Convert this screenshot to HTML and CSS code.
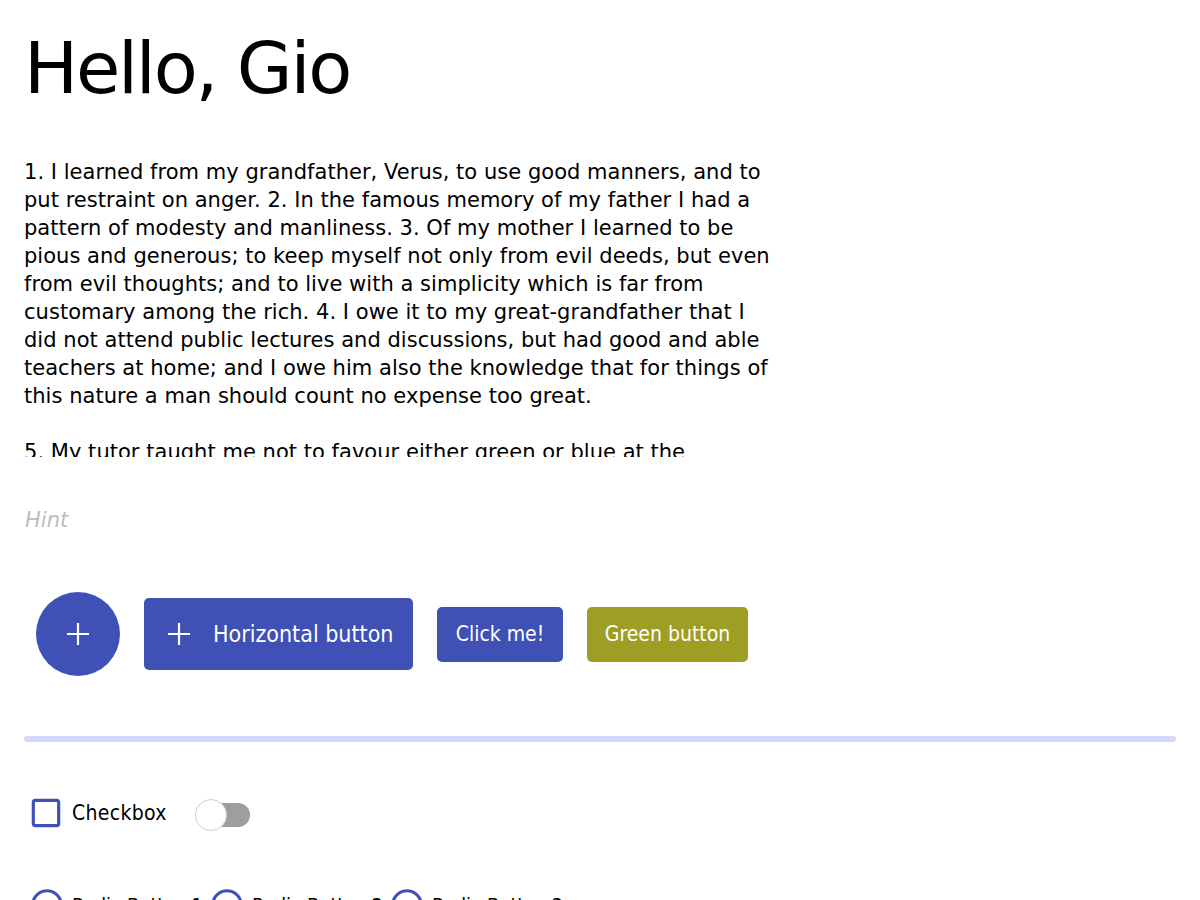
FILE: index.html
```html
<!DOCTYPE html>
<html lang="en">
<head>
<meta charset="utf-8">
<title>Kitchen</title>
<link rel="stylesheet" href="styles.css">
</head>
<body>
<div class="page">
  <h1 class="title">Hello, Gio</h1>

  <div class="editor">
    <div class="line">1. I learned from my grandfather, Verus, to use good manners, and to</div>
    <div class="line">put restraint on anger. 2. In the famous memory of my father I had a</div>
    <div class="line">pattern of modesty and manliness. 3. Of my mother I learned to be</div>
    <div class="line">pious and generous; to keep myself not only from evil deeds, but even</div>
    <div class="line">from evil thoughts; and to live with a simplicity which is far from</div>
    <div class="line">customary among the rich. 4. I owe it to my great-grandfather that I</div>
    <div class="line">did not attend public lectures and discussions, but had good and able</div>
    <div class="line">teachers at home; and I owe him also the knowledge that for things of</div>
    <div class="line">this nature a man should count no expense too great.</div>
    <div class="line"></div>
    <div class="line">5. My tutor taught me not to favour either green or blue at the</div>
  </div>

  <div class="hint">Hint</div>

  <div class="buttons">
    <button class="fab" type="button" aria-label="Add">
      <svg class="plus" viewBox="0 0 24 24" width="24" height="24"><path d="M12 1v22M1 12h22" stroke="#fff" stroke-width="2.2" fill="none"/></svg>
    </button>
    <button class="btn btn-icon" type="button">
      <svg class="plus" viewBox="0 0 24 24" width="24" height="24"><path d="M12 1v22M1 12h22" stroke="#fff" stroke-width="2.2" fill="none"/></svg>
      <span class="btn-label">Horizontal button</span>
    </button>
    <button class="btn btn-small btn-click" type="button"><span class="btn-label">Click me!</span></button>
    <button class="btn btn-small btn-green" type="button"><span class="btn-label">Green button</span></button>
  </div>

  <div class="progress"><div class="progress-fill" style="width:0%"></div></div>

  <div class="toggles">
    <label class="check">
      <svg class="check-icon" viewBox="0 0 24 24" width="38" height="38"><path fill="#3f51b5" d="M19 5v14H5V5h14m0-2H5c-1.1 0-2 .9-2 2v14c0 1.1.9 2 2 2h14c1.1 0 2-.9 2-2V5c0-1.1-.9-2-2-2z"/></svg>
      <span class="label">Checkbox</span>
    </label>
    <div class="switch">
      <div class="switch-track"></div>
      <div class="switch-thumb"></div>
    </div>
  </div>

  <div class="radios">
    <label class="radio">
      <svg class="radio-icon" viewBox="0 0 24 24" width="38" height="38"><path fill="#3f51b5" d="M12 2C6.48 2 2 6.48 2 12s4.48 10 10 10 10-4.48 10-10S17.52 2 12 2zm0 18c-4.42 0-8-3.580-8-8s3.58-8 8-8 8 3.58 8 8-3.58 8-8 8z"/></svg>
      <span class="label">Radio Button 1</span>
    </label>
    <label class="radio">
      <svg class="radio-icon" viewBox="0 0 24 24" width="38" height="38"><path fill="#3f51b5" d="M12 2C6.48 2 2 6.48 2 12s4.48 10 10 10 10-4.48 10-10S17.52 2 12 2zm0 18c-4.42 0-8-3.580-8-8s3.58-8 8-8 8 3.58 8 8-3.58 8-8 8z"/></svg>
      <span class="label">Radio Button 2</span>
    </label>
    <label class="radio">
      <svg class="radio-icon" viewBox="0 0 24 24" width="38" height="38"><path fill="#3f51b5" d="M12 2C6.48 2 2 6.48 2 12s4.48 10 10 10 10-4.48 10-10S17.52 2 12 2zm0 18c-4.42 0-8-3.580-8-8s3.58-8 8-8 8 3.58 8 8-3.58 8-8 8z"/></svg>
      <span class="label">Radio Button 3</span>
    </label>
  </div>
</div>
</body>
</html>
```
FILE: styles.css
```css
html, body {
  margin: 0;
  padding: 0;
  background: #ffffff;
}

body {
  font-family: "DejaVu Sans", "Liberation Sans", sans-serif;
  color: #000000;
  overflow: hidden;
  height: 900px;
}

.page {
  padding: 26px 24px 0 24px;
}

.title {
  margin: 0;
  font-size: 72px;
  line-height: 84px;
  font-weight: normal;
  letter-spacing: -2.2px;
}

.editor {
  margin-top: 48px;
  height: 299px;
  overflow: hidden;
  font-size: 21px;
  line-height: 28px;
  letter-spacing: 0.03px;
}

.line {
  height: 28px;
  white-space: nowrap;
}

.hint {
  margin-top: 49px;
  font-size: 21px;
  line-height: 28px;
  font-style: italic;
  color: #bdbdbd;
  padding-left: 1px;
}

.buttons {
  margin-top: 58px;
  display: flex;
  align-items: center;
  gap: 24px;
  padding-left: 12px;
  height: 84px;
}

.fab {
  width: 84px;
  height: 84px;
  border-radius: 50%;
  border: none;
  background: #3f51b5;
  padding: 0;
  display: flex;
  align-items: center;
  justify-content: center;
}

.plus {
  display: block;
  width: 24px;
  height: 24px;
}

.btn {
  border: none;
  border-radius: 5px;
  background: #3f51b5;
  color: #ffffff;
  display: flex;
  align-items: center;
  justify-content: center;
  padding: 0;
  font-family: "DejaVu Sans Condensed", "DejaVu Sans", sans-serif;
  font-stretch: condensed;
}

.btn-icon {
  width: 269px;
  height: 72px;
  justify-content: flex-start;
  padding-left: 23px;
  gap: 22px;
}

.btn-icon .btn-label {
  font-size: 23px;
}

.btn-small {
  height: 55px;
}

.btn-small .btn-label {
  font-size: 21px;
}

.btn-click {
  width: 126px;
}

.btn-green {
  width: 161px;
  background: #9e9d24;
}

.progress {
  margin-top: 60px;
  height: 6px;
  border-radius: 3px;
  background: #d3d7f8;
  overflow: hidden;
}

.progress-fill {
  height: 100%;
  background: #3f51b5;
}

.toggles {
  margin-top: 55px;
  height: 32px;
  display: flex;
  align-items: center;
}

.check, .radio {
  display: flex;
  align-items: center;
}

.check {
  margin-left: 3px;
}

.check-icon, .radio-icon {
  display: block;
  flex: none;
}

.label {
  font-family: "DejaVu Sans Condensed", "DejaVu Sans", sans-serif;
  font-stretch: condensed;
  font-size: 21px;
  line-height: 28px;
  white-space: nowrap;
}

.check .label {
  margin-left: 7px;
  letter-spacing: 0.3px;
}

.switch {
  position: relative;
  width: 56px;
  height: 32px;
  margin-left: 28px;
  margin-top: 4px;
}

.switch-track {
  position: absolute;
  left: 2px;
  top: 4px;
  width: 53px;
  height: 24px;
  border-radius: 12px;
  background: #9e9e9e;
}

.switch-thumb {
  position: absolute;
  left: 0;
  top: 0;
  width: 30px;
  height: 30px;
  border-radius: 50%;
  background: #ffffff;
  border: 1px solid #cfcfcf;
}

.radios {
  margin-top: 57px;
  display: flex;
  align-items: center;
  padding-left: 4px;
}

.radio {
  width: 180px;
  flex: none;
}

.radio .label {
  margin-left: 6px;
  font-size: 20px;
  letter-spacing: -0.2px;
}
```
